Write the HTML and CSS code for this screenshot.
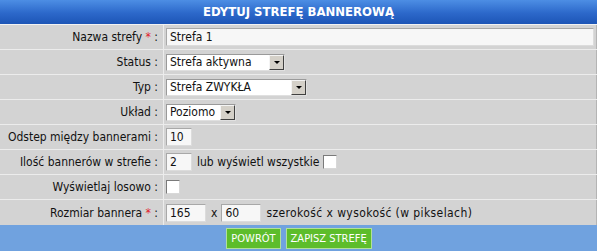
FILE: index.html
```html
<!DOCTYPE html>
<html lang="pl">
<head>
<meta charset="utf-8">
<title>Edytuj strefę bannerową</title>
<link rel="stylesheet" href="styles.css">
</head>
<body>
<div class="panel">
  <div class="title">EDYTUJ STREFĘ BANNEROWĄ</div>
  <table class="form">
    <tr>
      <td class="lbl">Nazwa strefy <span class="req">*</span> :</td>
      <td class="val"><span class="inp wide">Strefa 1</span></td>
    </tr>
    <tr>
      <td class="lbl">Status :</td>
      <td class="val"><span class="sel s-status"><span class="sel-txt">Strefa aktywna</span><span class="sel-btn"><span class="tri"></span></span></span></td>
    </tr>
    <tr>
      <td class="lbl">Typ :</td>
      <td class="val"><span class="sel s-typ"><span class="sel-txt">Strefa ZWYKŁA</span><span class="sel-btn"><span class="tri"></span></span></span></td>
    </tr>
    <tr>
      <td class="lbl">Układ :</td>
      <td class="val"><span class="sel s-uklad"><span class="sel-txt">Poziomo</span><span class="sel-btn"><span class="tri"></span></span></span></td>
    </tr>
    <tr>
      <td class="lbl">Odstep między bannerami :</td>
      <td class="val"><span class="inp small">10</span></td>
    </tr>
    <tr>
      <td class="lbl">Ilość bannerów w strefie :</td>
      <td class="val"><span class="inp small">2</span><span class="txt">lub wyświetl wszystkie</span><span class="chk"></span></td>
    </tr>
    <tr>
      <td class="lbl">Wyświetlaj losowo :</td>
      <td class="val"><span class="chk first"></span></td>
    </tr>
    <tr class="tall">
      <td class="lbl">Rozmiar bannera <span class="req">*</span> :</td>
      <td class="val"><span class="inp mid">165</span><span class="txt">x</span><span class="inp mid">60</span><span class="txt wideTxt">szerokość x wysokość (w pikselach)</span></td>
    </tr>
  </table>
  <div class="footer">
    <span class="btn">POWRÓT</span>
    <span class="btn">ZAPISZ STREFĘ</span>
  </div>
</div>
</body>
</html>
```

FILE: styles.css
```css
html, body {
  margin: 0;
  padding: 0;
  background: #ffffff;
}
body {
  font-family: "DejaVu Sans Condensed", "DejaVu Sans", sans-serif;
  font-size: 12px;
  color: #111;
}
.panel {
  width: 597px;
  background: #d3d3d3;
}
.title {
  height: 24px;
  line-height: 24px;
  text-align: center;
  color: #ffffff;
  font-weight: bold;
  font-size: 13px;
  background: linear-gradient(#4d8ee4, #2c68ca 55%, #1d55b6);
  border-bottom: 1px solid #f2f2f2;
}
.form {
  width: 597px;
  border-collapse: collapse;
  border-right: 1px solid #b4b4b4;
}
.form td {
  height: 24px;
  padding: 0;
  border-bottom: 1px solid #ececec;
  vertical-align: middle;
}
.form tr.tall td {
  height: 25px;
  border-bottom: none;
}
.lbl {
  width: 158px;
  padding-right: 5px !important;
  text-align: right;
  white-space: nowrap;
  border-right: 1px solid #ececec;
}
.val {
  padding-left: 2px !important;
  white-space: nowrap;
}
.req {
  color: #e0202a;
}
.inp {
  display: inline-block;
  vertical-align: middle;
  box-sizing: border-box;
  height: 18px;
  line-height: 16px;
  padding: 0 3px;
  background: #f7f7f7;
  border: 1px solid #a8a8a8;
  border-right-color: #dcdcdc;
  border-bottom-color: #dcdcdc;
}
.inp.wide { width: 428px; }
.inp.small { width: 26px; }
.inp.mid { width: 40px; }
.txt {
  display: inline-block;
  vertical-align: middle;
  margin: 0 4px 0 5px;
}
.wideTxt {
  letter-spacing: 0.4px;
}
.chk {
  display: inline-block;
  vertical-align: middle;
  box-sizing: border-box;
  width: 14px;
  height: 14px;
  background: #ffffff;
  border: 1px solid #7a7a7a;
  border-right-color: #d8d8d8;
  border-bottom-color: #d8d8d8;
}
.chk.first { margin-left: 0; }
.sel {
  display: inline-flex;
  vertical-align: middle;
  box-sizing: border-box;
  height: 17px;
  align-items: center;
  background: #ffffff;
  border: 1px solid #9a9a9a;
  border-right-color: #e0e0e0;
  border-bottom-color: #e0e0e0;
}
.sel-txt {
  flex: 1;
  padding-left: 3px;
  line-height: 15px;
}
.sel-btn {
  display: flex;
  align-items: center;
  justify-content: center;
  box-sizing: border-box;
  width: 15px;
  height: 15px;
  background: #d4d0c8;
  border: 1px solid;
  border-color: #f4f4f4 #404040 #404040 #f4f4f4;
}
.tri {
  width: 0;
  height: 0;
  border-left: 3px solid transparent;
  border-right: 3px solid transparent;
  border-top: 3px solid #000;
  margin-top: 1px;
}
.s-status { width: 119px; }
.s-typ { width: 141px; }
.s-uklad { width: 70px; }
.footer {
  height: 26px;
  background: #70a2df;
  display: flex;
  justify-content: center;
  align-items: center;
  gap: 5px;
  padding-left: 1px;
}
.btn {
  display: inline-block;
  box-sizing: border-box;
  height: 21px;
  line-height: 19px;
  padding: 0 4px;
  background: #5dbd2b;
  border: 1px solid #b2e09a;
  color: #ffffff;
  font-size: 11px;
}
```
